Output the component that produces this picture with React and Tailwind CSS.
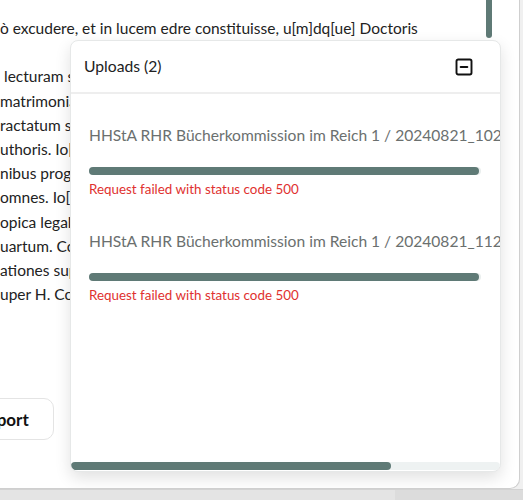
import { SquareMinus } from "lucide-react";

const lines = [
  "ò excudere, et in lucem edre constituisse, u[m]dq[ue] Doctoris",
  "",
  "lecturam suam de matrimonio",
  "matrimonialis causae",
  "ractatum satis amplum",
  "uthoris. Io[hannes] de",
  "nibus progressus",
  "omnes. Io[rdanus]",
  "opica legalis",
  "uartum. Conclusio",
  "ationes super",
  "uper H. Conradum",
];

const uploads = [
  { name: "HHStA RHR Bücherkommission im Reich 1 / 20240821_102233.jpg" },
  { name: "HHStA RHR Bücherkommission im Reich 1 / 20240821_112417.jpg" },
];

function UploadItem({ name }) {
  return (
    <div className="pl-[18px] mb-[31px]">
      <div className="whitespace-nowrap text-[15.6px] leading-[24px] text-[#6b706f]">{name}</div>
      <div className="mt-[20px] h-[8px] w-[392px] rounded-full bg-[#e9eeed]">
        <div className="h-[8px] w-[390px] rounded-full bg-[#5f7a76]" />
      </div>
      <div className="mt-[5px] text-[13.4px] leading-[18px] text-[#e0312f]">
        Request failed with status code 500
      </div>
    </div>
  );
}

export default function App() {
  return (
    <div className="w-[523px] h-[500px] flex flex-col bg-[#f0f0f0] font-['Lato','Noto_Sans',sans-serif] overflow-hidden">
      <div className="flex h-[489px]">
        <div className="relative w-[520px] h-[489px] bg-white rounded-br-[10px] border-r border-b border-[#cfcfcf] overflow-hidden">
          <div className="h-[313px] overflow-hidden pt-[16px] text-[15.5px] leading-[24.2px] text-[#222]">
            {lines.map((l, i) => (
              <div key={i} className={`whitespace-nowrap h-[24.2px] ${i === 2 ? "pl-[4px]" : ""}`}>
                {i === 1 ? <span className="-ml-[6px]">r</span> : l}
              </div>
            ))}
            <div className="whitespace-nowrap -ml-[1px]">i ace sum un ii ume</div>
          </div>

          <div className="mt-[85px] -ml-[47px] inline-flex h-[42px] items-center rounded-[10px] border border-[#e4e4e4] px-6 pt-[2px] text-[17px] font-bold text-[#111]">
            Export
          </div>

          <div className="absolute top-0 right-[27px] w-[6px] h-[38px] rounded-b-full bg-[#5f7a76]" />

          <div className="absolute left-[70px] top-[40px] w-[431px] h-[432px] flex flex-col rounded-[8px] border border-[#e6e8e8] bg-white shadow-[0_6px_16px_rgba(0,0,0,0.12)] overflow-hidden">
            <div className="flex h-[53px] shrink-0 items-center justify-between border-b-2 border-[#eeeeee] pl-[13px] pr-[26px]">
              <span className="text-[15.7px] text-[#222]">Uploads (2)</span>
              <SquareMinus size={20} strokeWidth={2.3} className="text-[#111]" />
            </div>
            <div className="flex-1 overflow-hidden pt-[29px]">
              {uploads.map((u) => (
                <UploadItem key={u.name} name={u.name} />
              ))}
            </div>
            <div className="mb-[1px] h-[8px] w-full rounded-full bg-[#eef2f2]">
              <div className="h-[8px] w-[320px] rounded-full bg-[#5f7a76]" />
            </div>
          </div>
        </div>
        <div className="flex-1 bg-[#f0f0f0]" />
      </div>
      <div className="flex flex-1 border-t border-[#d2d2d2]">
        <div className="w-[395px] bg-[#e4e4e4]" />
        <div className="flex-1 bg-[#dcdcdc]" />
      </div>
    </div>
  );
}
